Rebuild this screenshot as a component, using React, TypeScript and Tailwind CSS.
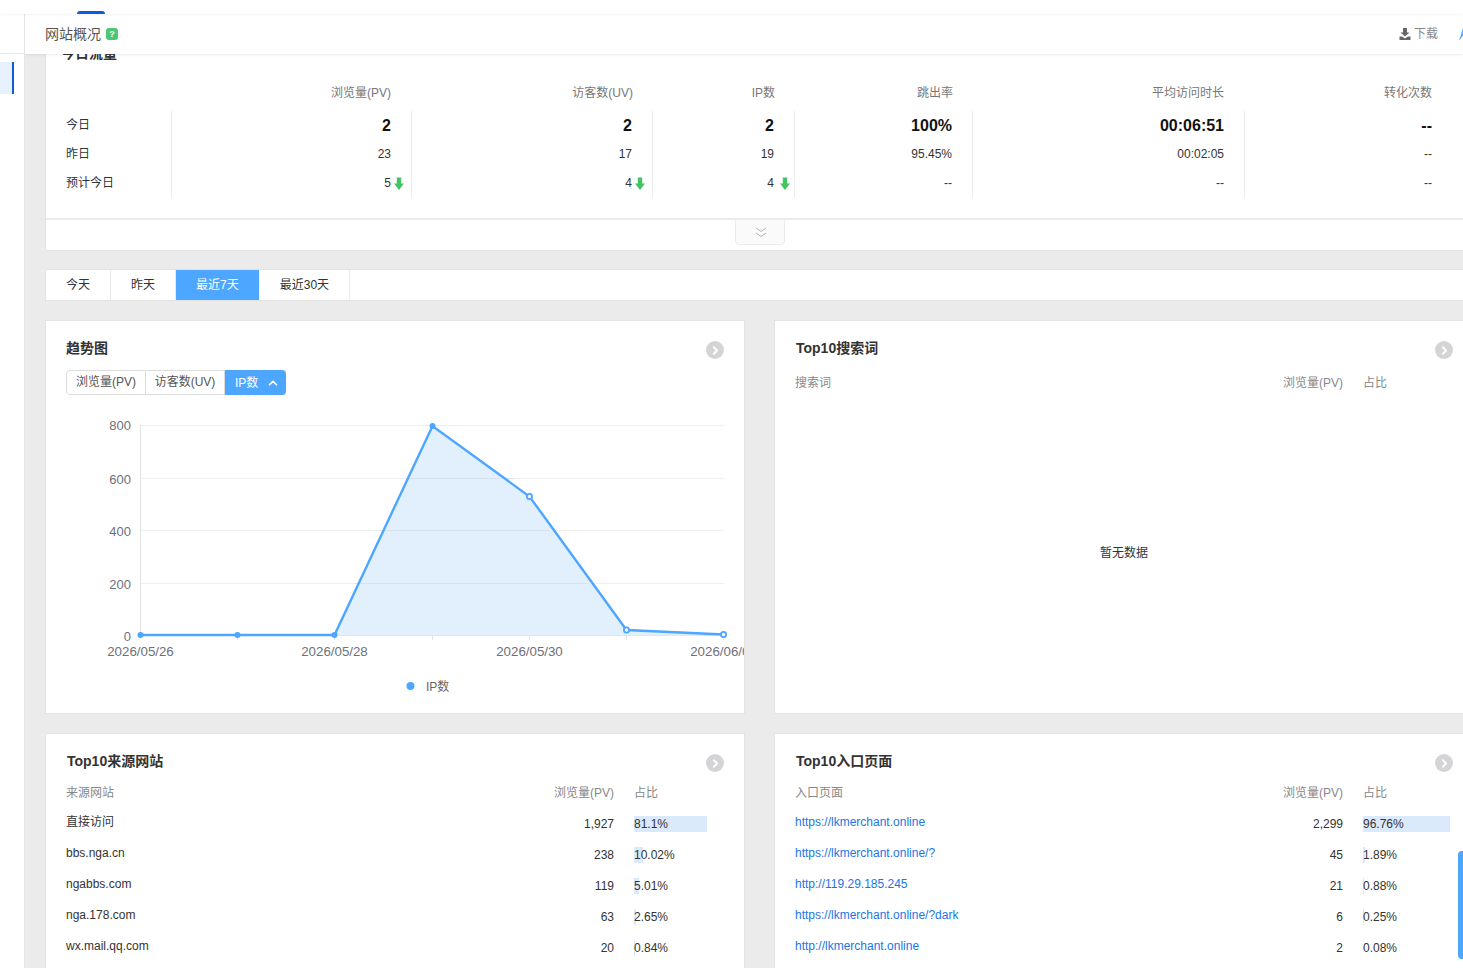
import { ChevronRight, ChevronUp } from 'lucide-react';

const stats = [
  { label: '浏览量(PV)', headPad: 'pr-[21px]', today: '2', yesterday: '23', predict: '5', arrowGap: 'left-[calc(100%+3px)]' },
  { label: '访客数(UV)', headPad: 'pr-[20px]', today: '2', yesterday: '17', predict: '4', arrowGap: 'left-[calc(100%+3px)]' },
  { label: 'IP数', headPad: 'pr-[20px]', today: '2', yesterday: '19', predict: '4', arrowGap: 'left-[calc(100%+6px)]' },
  { label: '跳出率', headPad: 'pr-[20px]', today: '100%', yesterday: '95.45%', predict: '--' },
  { label: '平均访问时长', headPad: 'pr-[21px]', today: '00:06:51', yesterday: '00:02:05', predict: '--' },
  { label: '转化次数', headPad: 'pr-[21px]', today: '--', yesterday: '--', predict: '--' },
];

const sources = [
  { name: '直接访问', pv: '1,927', pct: 81.1, text: '81.1%' },
  { name: 'bbs.nga.cn', pv: '238', pct: 10.02, text: '10.02%' },
  { name: 'ngabbs.com', pv: '119', pct: 5.01, text: '5.01%' },
  { name: 'nga.178.com', pv: '63', pct: 2.65, text: '2.65%' },
  { name: 'wx.mail.qq.com', pv: '20', pct: 0.84, text: '0.84%' },
];

const pages = [
  { name: 'https://lkmerchant.online', pv: '2,299', pct: 96.76, text: '96.76%' },
  { name: 'https://lkmerchant.online/?', pv: '45', pct: 1.89, text: '1.89%' },
  { name: 'http://119.29.185.245', pv: '21', pct: 0.88, text: '0.88%' },
  { name: 'https://lkmerchant.online/?dark', pv: '6', pct: 0.25, text: '0.25%' },
  { name: 'http://lkmerchant.online', pv: '2', pct: 0.08, text: '0.08%' },
];

const points = [
  [140.5, 635],
  [237.5, 635],
  [334.5, 635],
  [432.5, 426],
  [529.5, 496.5],
  [626.5, 630],
  [723.5, 634.5],
];

const DownArrow = ({ gap }: { gap: string }) => (
  <svg viewBox="0 0 10 13" className={`absolute ${gap} top-[2px] w-[10px] h-[13px]`}>
    <path d="M2.8 0.5h4.4v6h2.8l-5 6.5l-5-6.5h2.8z" fill="#43c463" />
  </svg>
);

const CircleArrow = () => (
  <span className="absolute right-[20px] top-[20px] w-[18px] h-[18px] rounded-full bg-[#d4d4d6] flex items-center justify-center text-white">
    <ChevronRight size={13} strokeWidth={3.5} />
  </span>
);

const StatCell = ({ value, bold, arrowGap, last }: { value: string; bold?: boolean; arrowGap?: string; last?: boolean }) => (
  <div className={`h-[29px] flex items-start justify-end ${bold ? 'pt-[7px]' : 'pt-[6px]'} ${last ? 'pr-[21px]' : 'pr-[20px] border-r border-[#ececec]'}`}>
    <span className={`relative leading-[16px] ${bold ? 'text-base font-bold text-[#111]' : 'text-xs text-[#333]'}`}>
      {value}
      {arrowGap && <DownArrow gap={arrowGap} />}
    </span>
  </div>
);

const RowLabel = ({ text }: { text: string }) => (
  <div className="h-[29px] pl-[20px] pt-[6px] text-xs leading-[16px] text-[#333] border-r border-[#ececec]">{text}</div>
);

const TrendChart = () => (
  <svg viewBox="46 410 698 290" className="w-[698px] h-[290px] block">
    {[425.5, 478.5, 530.5, 583.5].map((y) => (
      <line key={y} x1="140" x2="723.5" y1={y} y2={y} stroke="#eeeeee" />
    ))}
    <line x1="140.5" x2="140.5" y1="425" y2="636" stroke="#e3e3e6" />
    <line x1="140" x2="723.5" y1="635.5" y2="635.5" stroke="#d8dde6" />
    {[237.5, 334.5, 432.5, 529.5, 626.5, 723.5].map((x) => (
      <line key={x} x1={x} x2={x} y1="636" y2="640" stroke="#e3e3e6" />
    ))}
    <polygon points="334.5,635.5 432.5,426 529.5,496.5 626.5,630 723.5,634.5 723.5,635.5" fill="#e2effc" />
    <line x1="405" x2="514" y1="478.5" y2="478.5" stroke="#d7e3ef" />
    <line x1="380" x2="550" y1="530.5" y2="530.5" stroke="#d7e3ef" />
    <line x1="355" x2="588" y1="583.5" y2="583.5" stroke="#d7e3ef" />
    <polyline points={points.map((p) => p.join(',')).join(' ')} fill="none" stroke="#4da6ff" strokeWidth="2.4" />
    {points.map(([x, y], i) =>
      i < 4 ? (
        <circle key={x} cx={x} cy={y} r="3" fill="#4da6ff" />
      ) : (
        <circle key={x} cx={x} cy={y} r="2.6" fill="#fff" stroke="#4da6ff" strokeWidth="1.8" />
      ),
    )}
    <g fill="#6e7079" fontFamily="'Liberation Sans', sans-serif">
      {[['800', 430], ['600', 484], ['400', 536], ['200', 589], ['0', 641]].map(([t, y]) => (
        <text key={t} x="131" y={y} fontSize="13" textAnchor="end">{t}</text>
      ))}
      {[['2026/05/26', 140.5], ['2026/05/28', 334.5], ['2026/05/30', 529.5], ['2026/06/01', 723.5]].map(([t, x]) => (
        <text key={t} x={x} y="656" fontSize="13.3" textAnchor="middle">{t}</text>
      ))}
    </g>
    <circle cx="410.5" cy="686" r="4" fill="#4da6ff" />
    <text x="426" y="691" fontSize="12" fill="#666" fontFamily="'Liberation Sans', 'Noto Sans CJK SC', sans-serif">IP数</text>
  </svg>
);

const TopTable = ({ title, nameHead, rows, link }: { title: string; nameHead: string; rows: typeof sources; link?: boolean }) => (
  <div className="relative h-[300px] bg-white border border-[#e3e3e3] pl-[20px]">
    <CircleArrow />
    <h3 className="pt-[17px] pl-[1px] text-sm leading-[20px] font-bold text-[#333]">{title}</h3>
    <div className="grid grid-cols-[438px_90px_90px] gap-x-[20px] w-[658px] mt-[12px] h-[20px] items-center text-xs text-[#888]">
      <span>{nameHead}</span>
      <span className="text-right">浏览量(PV)</span>
      <span>占比</span>
    </div>
    <div className="mt-[5px]">
      {rows.map((row) => (
        <div key={row.name} className="grid grid-cols-[438px_90px_90px] gap-x-[20px] w-[658px] h-[31px] items-center text-xs text-[#333]">
          <span className={`pb-[3px] ${link ? 'text-[#1a76e3]' : ''}`}>{row.name}</span>
          <span className="text-right">{row.pv}</span>
          <span className="relative h-4 leading-4">
            <span className="absolute left-0 top-0 h-4 bg-[#dbe9fd]" style={{ width: `${(row.pct / 100) * 90}px` }} />
            <span className="relative">{row.text}</span>
          </span>
        </div>
      ))}
    </div>
  </div>
);

export default function App() {
  return (
    <div className="relative h-[968px] overflow-hidden flex flex-col bg-[#ebebeb] font-['Liberation_Sans','Noto_Sans_CJK_SC',sans-serif]">
      <div className="h-[14px] shrink-0 bg-white relative z-20 shadow-[0_1px_2px_rgba(0,0,0,0.05)]">
        <div className="ml-[77px] mt-[11px] w-[28px] h-[3px] rounded-t-sm bg-[#0f5bdc]" />
      </div>

      <div className="flex flex-1 min-h-0">
        <aside className="w-[25px] shrink-0 bg-white border-r border-[#e6e6e6]">
          <div className="h-[40px] border-b border-[#e8e8e8]" />
          <div className="mt-[8px] w-[14px] h-[32px] bg-[#e8f1fe] border-r-2 border-[#0f5bdc]" />
        </aside>

        <main className="flex-1 min-w-0 overflow-hidden">
          <header className="relative z-10 h-[40px] bg-white shadow-[0_1px_3px_rgba(0,0,0,0.08)] flex items-center pl-[20px] text-sm text-[#555]">
            <span>网站概况</span>
            <span className="ml-[5px] w-[12px] h-[12px] rounded-[3px] bg-[#48c774] text-white text-[9px] leading-[12px] text-center font-bold">?</span>
            <span className="ml-auto flex items-center text-xs text-[#888]">
              <svg viewBox="0 0 12 12" className="w-[12px] h-[12px] mr-[3px]">
                <path d="M4 0h4v4.5h2.5L6 8.6L1.5 4.5H4zM0.5 8.5h2.6L6 10.4l2.9-1.9h2.6V12h-11z" fill="#666" />
              </svg>
              下载
              <svg viewBox="0 0 12 14" className="ml-[21px] mr-[-8px] w-[12px] h-[14px]">
                <path d="M0 13L2 8L2.6 5.5L4 1H7V8H4.4L1 12.6Z" fill="#4da6ff" />
              </svg>
            </span>
          </header>

          <div className="w-[1429px] ml-[20px] -mt-[20px]">
            <section className="bg-white border border-[#e3e3e3]">
              <h2 className="pt-[8px] pl-[15px] text-sm leading-[20px] font-bold text-[#333]">今日流量</h2>
              <div className="grid grid-cols-[126px_240px_241px_142px_178px_272px_208px] mt-[20px] h-[20px] items-center text-xs text-[#777]">
                <span />
                {stats.map((s) => (
                  <span key={s.label} className={`text-right ${s.headPad}`}>{s.label}</span>
                ))}
              </div>
              <div className="grid grid-cols-[126px_240px_241px_142px_178px_272px_208px] mt-[8px]">
                <RowLabel text="今日" />
                {stats.map((s, i) => <StatCell key={s.label} value={s.today} bold last={i === 5} />)}
                <RowLabel text="昨日" />
                {stats.map((s, i) => <StatCell key={s.label} value={s.yesterday} last={i === 5} />)}
                <RowLabel text="预计今日" />
                {stats.map((s, i) => <StatCell key={s.label} value={s.predict} arrowGap={s.arrowGap} last={i === 5} />)}
              </div>
              <div className="mt-[20px] h-[32px] border-t-2 border-[#ebebeb] flex justify-center">
                <div className="w-[50px] h-[26px] -mt-px bg-[#fafafa] border border-[#ececec] rounded-b-sm flex items-center justify-center">
                  <svg viewBox="0 0 12 11" className="w-[12px] h-[11px] ml-[2px]" fill="none" stroke="#b4b4b4">
                    <path d="M1 1l5 3.5L11 1M1 6l5 3.5L11 6" />
                  </svg>
                </div>
              </div>
            </section>

            <nav className="mt-[18px] h-[32px] bg-white border border-[#e3e3e3] flex text-xs text-[#333]">
              <span className="px-[20px] leading-[30px] border-r border-[#ececec]">今天</span>
              <span className="px-[20px] leading-[30px] border-r border-[#ececec]">昨天</span>
              <span className="px-[20px] leading-[30px] bg-[#4da6ff] text-white">最近7天</span>
              <span className="pl-[21px] pr-[20px] leading-[30px] border-r border-[#ececec]">最近30天</span>
            </nav>

            <div className="grid grid-cols-[700px_700px] gap-x-[29px] gap-y-[19px] mt-[19px]">
              <div className="relative h-[394px] bg-white border border-[#e3e3e3]">
                <CircleArrow />
                <h3 className="pt-[17px] pl-[20px] text-sm leading-[20px] font-bold text-[#333]">趋势图</h3>
                <div className="ml-[20px] mt-[12px] flex text-xs h-[25px] w-[220px]">
                  <span className="w-[80px] border border-[#dcdcdc] rounded-l-sm text-center leading-[23px] text-[#555]">浏览量(PV)</span>
                  <span className="w-[79px] border-y border-r border-[#dcdcdc] text-center leading-[23px] text-[#555]">访客数(UV)</span>
                  <span className="flex-1 bg-[#4da6ff] rounded-r-sm text-white flex items-center pl-[10px]">
                    IP数
                    <ChevronUp size={14} strokeWidth={3} className="ml-[8px]" />
                  </span>
                </div>
                <div className="mt-[15px]">
                  <TrendChart />
                </div>
              </div>

              <div className="relative h-[394px] bg-white border border-[#e3e3e3] pl-[20px]">
                <CircleArrow />
                <h3 className="pt-[17px] pl-[1px] text-sm leading-[20px] font-bold text-[#333]">Top10搜索词</h3>
                <div className="grid grid-cols-[438px_90px_90px] gap-x-[20px] w-[658px] mt-[15px] h-[20px] items-center text-xs text-[#888]">
                  <span>搜索词</span>
                  <span className="text-right">浏览量(PV)</span>
                  <span>占比</span>
                </div>
                <p className="mt-[150px] w-[658px] text-center text-xs leading-[20px] text-[#333]">暂无数据</p>
              </div>

              <TopTable title="Top10来源网站" nameHead="来源网站" rows={sources} />
              <TopTable title="Top10入口页面" nameHead="入口页面" rows={pages} link />
            </div>
          </div>
        </main>
      </div>

      <div className="absolute right-0 top-[851px] w-[5px] h-[108px] rounded-l-[4px] bg-[#4da6ff]" />
    </div>
  );
}
